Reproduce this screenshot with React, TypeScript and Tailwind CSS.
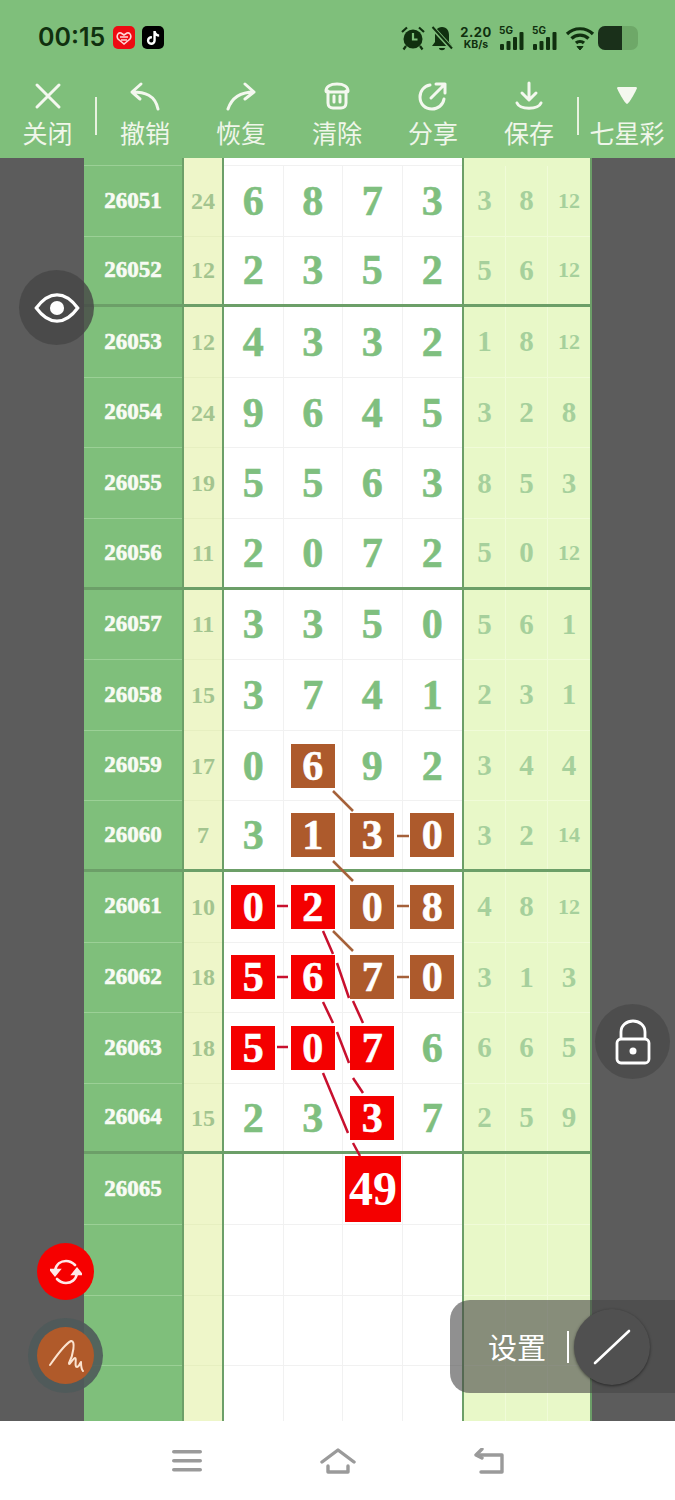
import React from "react";
import { FaTiktok } from "react-icons/fa";

type Cell = string | { v: string; c: "r" | "b" };
const r = (v: string): Cell => ({ v, c: "r" });
const b = (v: string): Cell => ({ v, c: "b" });

const rows: { id: string; sum: string; cells: Cell[]; right: string[]; end?: boolean }[] = [
  { id: "26051", sum: "24", cells: ["6", "8", "7", "3"], right: ["3", "8", "12"] },
  { id: "26052", sum: "12", cells: ["2", "3", "5", "2"], right: ["5", "6", "12"], end: true },
  { id: "26053", sum: "12", cells: ["4", "3", "3", "2"], right: ["1", "8", "12"] },
  { id: "26054", sum: "24", cells: ["9", "6", "4", "5"], right: ["3", "2", "8"] },
  { id: "26055", sum: "19", cells: ["5", "5", "6", "3"], right: ["8", "5", "3"] },
  { id: "26056", sum: "11", cells: ["2", "0", "7", "2"], right: ["5", "0", "12"], end: true },
  { id: "26057", sum: "11", cells: ["3", "3", "5", "0"], right: ["5", "6", "1"] },
  { id: "26058", sum: "15", cells: ["3", "7", "4", "1"], right: ["2", "3", "1"] },
  { id: "26059", sum: "17", cells: ["0", b("6"), "9", "2"], right: ["3", "4", "4"] },
  { id: "26060", sum: "7", cells: ["3", b("1"), b("3"), b("0")], right: ["3", "2", "14"], end: true },
  { id: "26061", sum: "10", cells: [r("0"), r("2"), b("0"), b("8")], right: ["4", "8", "12"] },
  { id: "26062", sum: "18", cells: [r("5"), r("6"), b("7"), b("0")], right: ["3", "1", "3"] },
  { id: "26063", sum: "18", cells: [r("5"), r("0"), r("7"), "6"], right: ["6", "6", "5"] },
  { id: "26064", sum: "15", cells: ["2", "3", r("3"), "7"], right: ["2", "5", "9"], end: true },
  { id: "26065", sum: "", cells: ["", "", "", ""], right: ["", "", ""] },
  { id: "", sum: "", cells: ["", "", "", ""], right: ["", "", ""] },
  { id: "", sum: "", cells: ["", "", "", ""], right: ["", "", ""] },
  { id: "", sum: "", cells: ["", "", "", ""], right: ["", "", ""] },
];

const serif = "font-['Liberation_Serif',serif] font-bold";
const heavy = "[-webkit-text-stroke:0.6px_currentColor]";
const cjk = "font-['Noto_Sans_CJK_SC','Noto_Sans',sans-serif]";

function Tool({ label, children }: { label: string; children: React.ReactNode }) {
  return (
    <div className="flex flex-col items-center">
      <div className="h-[36px] w-[40px] flex items-center justify-center">{children}</div>
      <span className={`${cjk} text-[25px] leading-[36px] text-[#f0f6ea] whitespace-nowrap`}>{label}</span>
    </div>
  );
}

const iconProps = {
  fill: "none",
  stroke: "#f4f8ef",
  strokeWidth: 3,
  strokeLinecap: "round" as const,
  strokeLinejoin: "round" as const,
};

function Row({ row }: { row: (typeof rows)[number] }) {
  const line = row.end ? "border-b-[3px] border-[#6c9f68]" : "";
  return (
    <div className={`flex h-[70.6px] shrink-0 ${line}`}>
      <div className={`${serif} ${heavy} w-[98px] flex items-center justify-center text-[23px] text-[#f8fbf4] ${row.end ? "" : "border-b border-[#9bd096]"}`}>
        {row.id}
      </div>
      <div className="w-[2px] bg-[#6c9f68]" />
      <div className={`${serif} w-[38px] flex items-center justify-center text-[24px] text-[#a3c48f] bg-[#eef6c9] ${row.end ? "" : "border-b border-[#e6efc0]"}`}>
        {row.sum}
      </div>
      <div className="w-[2px] bg-[#6c9f68]" />
      <div className="w-[238px] grid grid-cols-4 bg-white">
        {row.cells.map((c, i) => {
          const box = typeof c !== "string";
          return (
            <div
              key={i}
              className={`relative flex items-center justify-center ${i < 3 ? "border-r border-[#f1f1f1]" : ""} ${row.end ? "" : "border-b border-[#f1f1f1]"}`}
            >
              {box ? (
                <div className={`${serif} ${heavy} relative z-10 w-[44px] h-[44px] flex items-center justify-center text-[42px] leading-none text-white ${c.c === "r" ? "bg-[#f40000]" : "bg-[#ad5a2c]"}`}>
                  {c.v}
                </div>
              ) : (
                <span className={`${serif} ${heavy} relative z-10 text-[42px] leading-none text-[#7fbf7f]`}>{c}</span>
              )}
            </div>
          );
        })}
      </div>
      <div className="w-[2px] bg-[#6c9f68]" />
      <div className="w-[126px] grid grid-cols-3 bg-[#e8f8c8]">
        {row.right.map((v, i) => (
          <div
            key={i}
            className={`${serif} flex items-center justify-center leading-none text-[#a6d09c] ${v.length > 1 ? "text-[22px]" : "text-[29px]"} ${i < 2 ? "border-r border-[#f0fbd8]" : ""} ${row.end ? "" : "border-b border-[#f0fbd8]"}`}
          >
            {v}
          </div>
        ))}
      </div>
      <div className="w-[2px] bg-[#6c9f68]" />
    </div>
  );
}

function Connectors() {
  const red = "#c8102e";
  const brown = "#a5613a";
  return (
    <svg className="absolute inset-0 w-[675px] h-[1263px]" viewBox="0 158 675 1263" fill="none" strokeWidth="2.5">
      <g stroke={brown}>
        <path d="M333 791L353 811" />
        <path d="M333 861L353 881" />
        <path d="M333 931L353 951" />
        <path d="M397 836H409" />
        <path d="M397 906H409" />
        <path d="M397 977H409" />
      </g>
      <g stroke={red}>
        <path d="M277 906H288" />
        <path d="M277 977H288" />
        <path d="M277 1047H288" />
        <path d="M323 931L333 954M337 963L349 998" />
        <path d="M353 1001L363 1023" />
        <path d="M323 1002L333 1023M337 1032L349 1063" />
        <path d="M353 1078L363 1093" />
        <path d="M323 1073L348 1133M353 1143L360 1156" />
      </g>
    </svg>
  );
}

export default function App() {
  return (
    <div className="relative w-[675px] h-[1500px] overflow-hidden bg-white">
      <header className="h-[158px] bg-[#7fbf7b]">
        <div className="h-[75px] flex items-center pl-[38px] pr-[37px] text-[#10300f]">
          <span className="font-['Inter',sans-serif] font-semibold text-[25px] leading-none w-[75px]">00:15</span>
          <div className="w-[22px] h-[23px] rounded-[5px] bg-[#ee0a12] flex items-center justify-center">
            <svg width="16" height="14" viewBox="0 0 16 14" fill="none" stroke="#ffd7d7" strokeWidth="1.6">
              <path d="M8 13L2 8C0 5 2 1 5 2L8 4L11 2C14 1 16 5 14 8Z" />
              <path d="M4 6H12M5 9H11" />
            </svg>
          </div>
          <div className="ml-[7px] w-[22px] h-[23px] rounded-[5px] bg-black flex items-center justify-center">
            <FaTiktok className="text-white text-[14px]" />
          </div>
          <div className="flex-1" />
          <svg width="26" height="26" viewBox="0 0 26 26" className="mr-[5px]" fill="#10300f">
            <circle cx="13" cy="14" r="9.5" />
            <path d="M2 7L7 2.5M24 7L19 2.5M6 21L3.5 24.5M20 21L22.5 24.5" stroke="#10300f" strokeWidth="2.2" />
            <path d="M13 8V14.5H17.5" stroke="#7fbf7b" strokeWidth="2.2" fill="none" />
          </svg>
          <svg width="22" height="26" viewBox="0 0 22 26" className="mr-[7px]" fill="#10300f">
            <path d="M11 2C6 2 4 6 4 10V17L1 21H21L18 17V10C18 6 16 2 11 2ZM8 23H14C14 26 8 26 8 23Z" />
            <path d="M1 2L21 24" stroke="#7fbf7b" strokeWidth="4.5" />
            <path d="M1.5 2L21 23.5" stroke="#10300f" strokeWidth="2" />
          </svg>
          <div className="w-[32px] mr-[7px] flex flex-col items-center font-['Inter',sans-serif] font-bold leading-none">
            <span className="text-[13px] leading-[13px] tracking-[0.5px]">2.20</span>
            <span className="text-[10.5px] leading-[11px]">KB/s</span>
          </div>
          {[0, 1].map((k) => (
            <div key={k} className="relative w-[25px] h-[26px] mr-[8px]">
              <span className="absolute left-0 top-[-1px] font-['Inter',sans-serif] font-bold text-[10px] leading-[12px]">5G</span>
              <svg width="25" height="26" viewBox="0 0 25 26" className="absolute inset-0" fill="#10300f">
                <rect x="1" y="19" width="4" height="6" rx="1" />
                <rect x="7.5" y="16" width="4" height="9" rx="1" />
                <rect x="14" y="12" width="4" height="13" rx="1" />
                <rect x="20.5" y="7" width="4" height="18" rx="1" />
              </svg>
            </div>
          ))}
          <svg width="30" height="26" viewBox="0 0 30 26" className="mr-[3px]" fill="none" stroke="#10300f" strokeWidth="3.2">
            <path d="M2 9C9 2 21 2 28 9" />
            <path d="M6.5 13.5C11 9 19 9 23.5 13.5" />
            <path d="M11 18C13 16 17 16 19 18" />
            <path d="M15 25L12 21.5H18Z" fill="#10300f" strokeWidth="1" />
          </svg>
          <div className="w-[40px] h-[24px] rounded-[7px] overflow-hidden flex bg-[#6ea868]">
            <div className="w-[24px] bg-[#1a301a]" />
          </div>
        </div>
        <div className="h-[83px] pt-[3px] grid grid-cols-[95px_2px_96px_96px_96px_96px_96px_2px_1fr] items-start">
          <Tool label="关闭">
            <svg width="30" height="30" viewBox="0 0 30 30" {...iconProps}><path d="M4 4L26 26M26 4L4 26" /></svg>
          </Tool>
          <div className="h-[38px] w-[2px] bg-[#e8f2e0] mt-[19px]" />
          <Tool label="撤销">
            <svg width="32" height="30" viewBox="0 0 32 30" {...iconProps}><path d="M12 3L3 11L11 18M3 11C16 11 26 14 29 28" /></svg>
          </Tool>
          <Tool label="恢复">
            <svg width="32" height="30" viewBox="0 0 32 30" {...iconProps}><path d="M20 3L29 11L20 18M29 11C16 11 7 16 3 28" /></svg>
          </Tool>
          <Tool label="清除">
            <svg width="28" height="30" viewBox="0 0 28 30" {...iconProps}><path d="M5 10V22C5 25 7 27 10 27H18C21 27 23 25 23 22V10" /><path d="M3 10C3 6 7 3 14 3C21 3 25 6 25 10C25 11 24 11 23 11H5C4 11 3 11 3 10Z" /><path d="M11 15V21M17 15V21" /></svg>
          </Tool>
          <Tool label="分享">
            <svg width="32" height="30" viewBox="0 0 32 30" {...iconProps}><path d="M13 4C7 5 3 10 3 16C3 23 8 28 15 28C21 28 26 24 27 18" /><path d="M14 17L28 3M19 3H28V12" /></svg>
          </Tool>
          <Tool label="保存">
            <svg width="30" height="30" viewBox="0 0 30 30" {...iconProps}><path d="M15 2V18M8 12L15 19L22 12" /><path d="M3 22C6 29 24 29 27 22" /></svg>
          </Tool>
          <div className="h-[38px] w-[2px] bg-[#e8f2e0] mt-[19px]" />
          <Tool label="七星彩">
            <svg width="22" height="20" viewBox="0 0 22 20" fill="#f4f8ef"><path d="M1 2C1 1 2 1 3 1H19C20 1 21 1 21 2C21 3 13 18 11 18C9 18 1 3 1 2Z" /></svg>
          </Tool>
        </div>
      </header>

      <main className="relative h-[1263px] overflow-hidden flex bg-[#5c5c5c]">
        <div className="w-[84px] shrink-0" />
        <div className="relative w-[508px] shrink-0 flex flex-col bg-[#7fbf7b]">
          <div className="flex h-[8px] shrink-0">
            <div className="w-[98px] border-b border-[#9bd096]" />
            <div className="w-[2px] bg-[#6c9f68]" />
            <div className="w-[38px] bg-[#eef6c9]" />
            <div className="w-[2px] bg-[#6c9f68]" />
            <div className="w-[238px] bg-white border-b border-[#f1f1f1]" />
            <div className="w-[2px] bg-[#6c9f68]" />
            <div className="w-[126px] bg-[#e8f8c8]" />
            <div className="w-[2px] bg-[#6c9f68]" />
          </div>
          {rows.map((row, i) => (
            <Row key={i} row={row} />
          ))}
        </div>
        <div className="flex-1" />

        <div className="absolute left-0 top-0 w-[675px] h-[1263px] z-10 pointer-events-none">
          <Connectors />
        </div>
        <div className={`${serif} absolute z-20 left-[345px] top-[998px] w-[56px] h-[66px] bg-[#f40000] flex items-center justify-center text-[48px] leading-none text-white`}>
          49
        </div>

        {/* eye */}
        <div className="absolute z-30 left-[19px] top-[112px] w-[75px] h-[75px] rounded-full bg-[#464646]/80 flex items-center justify-center">
          <svg width="46" height="32" viewBox="0 0 48 34" fill="none" stroke="white" strokeWidth="3.4">
            <path d="M2 17C10 6 17 3 24 3C31 3 38 6 46 17C38 28 31 31 24 31C17 31 10 28 2 17Z" />
            <circle cx="24" cy="17" r="7.5" fill="white" stroke="none" />
          </svg>
        </div>
        {/* lock */}
        <div className="absolute z-30 left-[595px] top-[846px] w-[75px] h-[75px] rounded-full bg-[#4a4a4a]/80 flex items-center justify-center">
          <svg width="36" height="46" viewBox="0 0 36 46" fill="none" stroke="white" strokeWidth="2.8">
            <path d="M6 20V13C6 6 12 2 18 2C24 2 30 6 30 13V20" />
            <rect x="2" y="20" width="32" height="24" rx="4" />
            <circle cx="18" cy="32" r="3.5" fill="white" stroke="none" />
          </svg>
        </div>
        {/* refresh */}
        <div className="absolute z-30 left-[37px] top-[1085px] w-[57px] h-[57px] rounded-full bg-[#f60000] flex items-center justify-center">
          <svg width="32" height="28" viewBox="0 0 32 28" fill="none" stroke="#ffe9e9" strokeWidth="2.6" strokeLinecap="round">
            <path d="M5 13C6 6 11 3 16 3C20 3 23 5 25 7" />
            <path d="M27 15C26 22 21 25 16 25C12 25 9 23 7 21" />
            <path d="M1 12L5 17L9 12Z" fill="#ffe9e9" />
            <path d="M23 16L27 11L31 16Z" fill="#ffe9e9" />
          </svg>
        </div>
        {/* signature */}
        <div className="absolute z-30 left-[28px] top-[1160px] w-[75px] h-[75px] rounded-full bg-[#4f5a5a]/90 flex items-center justify-center">
          <div className="w-[57px] h-[57px] rounded-full bg-[#b05a2a] flex items-center justify-center">
            <svg width="38" height="36" viewBox="0 0 38 36" fill="none" stroke="#fbe3cf" strokeWidth="2" strokeLinecap="round" strokeLinejoin="round">
              <path d="M3 27C10 17 18 6 24 3C29 2 26 18 22 25C22 29 26 20 28 20C30 20 27 29 30 29C32 29 33 25 34 24C34 27 34 31 36 33" />
            </svg>
          </div>
        </div>
        {/* settings */}
        <div className="absolute z-30 left-[450px] top-[1142px] w-[225px] h-[93px] rounded-l-[20px] bg-[#464646]/60 flex items-center">
          <span className={`${cjk} ml-[38px] text-[29px] leading-none text-white`}>设置</span>
          <div className="ml-[21px] w-[2px] h-[32px] bg-white" />
        </div>
        <div className="absolute z-40 left-[574px] top-[1151px] w-[76px] h-[76px] rounded-full bg-[#505050] shadow-[0_1px_3px_rgba(0,0,0,0.5)] flex items-center justify-center">
          <svg width="38" height="36" viewBox="0 0 38 36" stroke="white" strokeWidth="2.6" strokeLinecap="round"><path d="M2 34L36 2" /></svg>
        </div>
      </main>

      <nav className="h-[79px] flex items-center bg-white">
        <div className="w-[675px] flex items-center justify-center gap-[118px]">
          <svg width="30" height="22" viewBox="0 0 30 22" fill="#9a9a9a">
            <rect x="0" y="0" width="30" height="3.6" rx="1.8" />
            <rect x="0" y="9" width="30" height="3.6" rx="1.8" />
            <rect x="0" y="18" width="30" height="3.6" rx="1.8" />
          </svg>
          <svg width="36" height="26" viewBox="0 0 36 26" fill="none" stroke="#9a9a9a" strokeWidth="3.4" strokeLinecap="round" strokeLinejoin="round">
            <path d="M2 14L18 2L34 14" />
            <path d="M8 18V24H28V18" />
          </svg>
          <svg width="30" height="26" viewBox="0 0 30 26" fill="none" stroke="#9a9a9a" strokeWidth="3.4" strokeLinecap="round" strokeLinejoin="round">
            <path d="M6 7H28V24H7" />
            <path d="M8 1L2 7L8 10" />
          </svg>
        </div>
      </nav>
    </div>
  );
}
